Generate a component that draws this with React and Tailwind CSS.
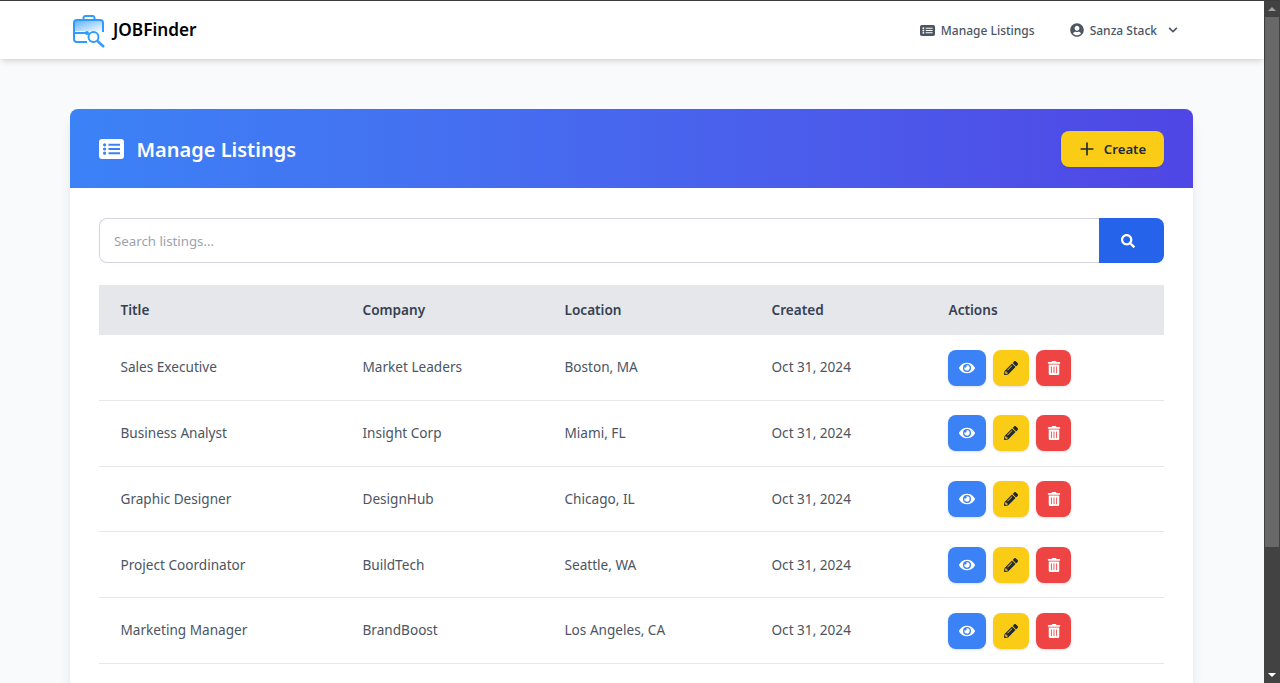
import React from "react";
import { FaUserCircle, FaChevronDown, FaSearch, FaEye, FaPencilAlt, FaTrashAlt } from "react-icons/fa";
import { Plus } from "lucide-react";

const rows = [
  ["Sales Executive", "Market Leaders", "Boston, MA"],
  ["Business Analyst", "Insight Corp", "Miami, FL"],
  ["Graphic Designer", "DesignHub", "Chicago, IL"],
  ["Project Coordinator", "BuildTech", "Seattle, WA"],
  ["Marketing Manager", "BrandBoost", "Los Angeles, CA"],
];

function ListIcon({ className }) {
  return (
    <svg viewBox="0 0 25 20" className={className} fill="currentColor" preserveAspectRatio="none">
      <path
        fillRule="evenodd"
        d="M3 0h19a3 3 0 0 1 3 3v14a3 3 0 0 1-3 3H3a3 3 0 0 1-3-3V3a3 3 0 0 1 3-3zM5.6 4.2a1.6 1.6 0 1 0 0 3.2 1.6 1.6 0 0 0 0-3.2zM9.5 4.8v2h11.5v-2zM5.6 8.4a1.6 1.6 0 1 0 0 3.2 1.6 1.6 0 0 0 0-3.2zM9.5 9v2h11.5V9zM5.6 12.6a1.6 1.6 0 1 0 0 3.2 1.6 1.6 0 0 0 0-3.2zM9.5 13.2v2h11.5v-2z"
      />
    </svg>
  );
}

function Logo() {
  return (
    <svg width="34" height="36" viewBox="0 0 34 36" fill="none" className="shrink-0">
      <defs>
        <linearGradient id="bag" x1="0" y1="0" x2="1" y2="1">
          <stop offset="0" stopColor="#2f9bff" stopOpacity="0.75" />
          <stop offset="1" stopColor="#2f9bff" stopOpacity="0.05" />
        </linearGradient>
      </defs>
      <path d="M3 9h27v10H3z" fill="url(#bag)" />
      <path d="M11.5 8V5.5A2 2 0 0 1 13.5 4h7a2 2 0 0 1 2 1.5V8" stroke="#2f9bff" strokeWidth="2" />
      <path d="M15 30H5a3 3 0 0 1-3-3V11a3 3 0 0 1 3-3h23a3 3 0 0 1 3 3v9" stroke="#2f9bff" strokeWidth="2" />
      <path d="M2 21h12" stroke="#2f9bff" strokeWidth="2" />
      <circle cx="15" cy="21" r="2" fill="#2f9bff" />
      <circle cx="21.5" cy="25" r="5" stroke="#2f9bff" strokeWidth="2" />
      <path d="M25.5 29l6.5 6" stroke="#2f9bff" strokeWidth="2.4" />
    </svg>
  );
}

function ActionButton({ className, children }) {
  return (
    <button className={`flex h-9 items-center justify-center rounded-lg shadow-sm ${className}`}>{children}</button>
  );
}

export default function App() {
  return (
    <div className="flex h-[683px] overflow-hidden bg-[#f9fafb] font-['Noto_Sans','Open_Sans',sans-serif]">
      <div className="flex min-w-0 flex-1 flex-col border-t border-[#3b3b3b]">
        <header className="relative z-10 flex h-[58px] shrink-0 items-center justify-between bg-white pl-[72px] pr-[86px] shadow-md">
          <div className="flex items-center gap-[7px]">
            <Logo />
            <span className="text-[17.2px] font-semibold text-black">JOBFinder</span>
          </div>
          <nav className="flex items-center text-[12px] font-medium text-[#4b5563]">
            <ListIcon className="mr-[6px] h-[11px] w-[15px]" />
            <span className="pt-[2px]">Manage Listings</span>
            <FaUserCircle className="ml-[35px] mr-[6px] text-[14px]" />
            <span className="pt-[2px]">Sanza Stack</span>
            <FaChevronDown className="ml-[11px] text-[10px]" />
          </nav>
        </header>
        <main className="min-h-0 flex-1 pl-[70px] pr-[71px] pt-[50px]">
          <section className="overflow-hidden rounded-t-lg bg-white pb-10 shadow-lg">
            <div className="flex h-[79px] items-center justify-between bg-gradient-to-r from-[#3b82f6] to-[#4f46e5] px-[29px]">
              <h1 className="flex items-center gap-[12.5px] text-[20px] font-semibold text-white">
                <ListIcon className="h-5 w-[25px]" />
                <span className="pt-[2px]">Manage Listings</span>
              </h1>
              <button className="flex h-9 w-[103px] items-center justify-center gap-[7px] rounded-lg bg-[#facc15] pr-[2px] text-[13.2px] font-semibold text-[#1f2937] shadow-sm">
                <Plus size={20} strokeWidth={2} />
                <span className="pt-[2px]">Create</span>
              </button>
            </div>
            <div className="px-[29px] pt-[30px]">
              <div className="flex h-[45px]">
                <div className="flex flex-1 items-center rounded-l-lg border border-r-0 border-[#d1d5db] px-[14px] pt-[2px] text-[13.25px] text-[#9ca3af]">
                  Search listings...
                </div>
                <button className="flex w-[65px] items-center justify-center rounded-r-lg bg-[#2563eb] pr-[8px] text-white">
                  <FaSearch className="text-[14px]" />
                </button>
              </div>
              <table className="mt-[22px] w-full table-fixed border-separate border-spacing-0 text-left text-[13.6px]">
                <colgroup>
                  <col className="w-[242px]" />
                  <col className="w-[202px]" />
                  <col className="w-[207px]" />
                  <col className="w-[177px]" />
                  <col />
                </colgroup>
                <thead>
                  <tr className="h-[50px] bg-[#e5e7eb] text-[#374151]">
                    <th className="pl-[21.5px] pt-[1px] font-semibold">Title</th>
                    <th className="pl-[21.5px] pt-[1px] font-semibold">Company</th>
                    <th className="pl-[21.5px] pt-[1px] font-semibold">Location</th>
                    <th className="pl-[21.5px] pt-[1px] font-semibold">Created</th>
                    <th className="pl-[21.5px] pt-[1px] font-semibold">Actions</th>
                  </tr>
                </thead>
                <tbody className="text-[#4b5563]">
                  {rows.map(([title, company, location]) => (
                    <tr key={title} className="h-[65.75px]">
                      <td className="border-b border-[#e5e7eb] pl-[21.5px] pt-[0.6px]">{title}</td>
                      <td className="border-b border-[#e5e7eb] pl-[21.5px] pt-[0.6px]">{company}</td>
                      <td className="border-b border-[#e5e7eb] pl-[21.5px] pt-[0.6px]">{location}</td>
                      <td className="border-b border-[#e5e7eb] pl-[21.5px] pt-[0.6px]">Oct 31, 2024</td>
                      <td className="border-b border-[#e5e7eb] pl-[21px] pt-[0.6px]">
                        <div className="flex items-center gap-[7px]">
                          <ActionButton className="w-[38px] bg-[#3b82f6] text-white"><FaEye className="text-[16px]" /></ActionButton>
                          <ActionButton className="w-[36px] bg-[#facc15] text-[#1f2937]"><FaPencilAlt className="text-[14px]" /></ActionButton>
                          <ActionButton className="w-[35px] bg-[#ef4444] text-white"><FaTrashAlt className="text-[14px]" /></ActionButton>
                        </div>
                      </td>
                    </tr>
                  ))}
                </tbody>
              </table>
            </div>
          </section>
        </main>
      </div>
      <div className="flex w-4 shrink-0 flex-col items-center border-t border-[#3b3b3b] bg-[#424242]">
        <svg width="16" height="16" viewBox="0 0 16 16"><path d="M4 10l4-4 4 4z" fill="#a0a0a0" /></svg>
        <div className="h-[530px] w-[14px] bg-[#686868]" />
        <div className="flex-1" />
        <svg width="16" height="17" viewBox="0 0 16 17"><path d="M4 7l4 4 4-4z" fill="#ffffff" /></svg>
      </div>
    </div>
  );
}
